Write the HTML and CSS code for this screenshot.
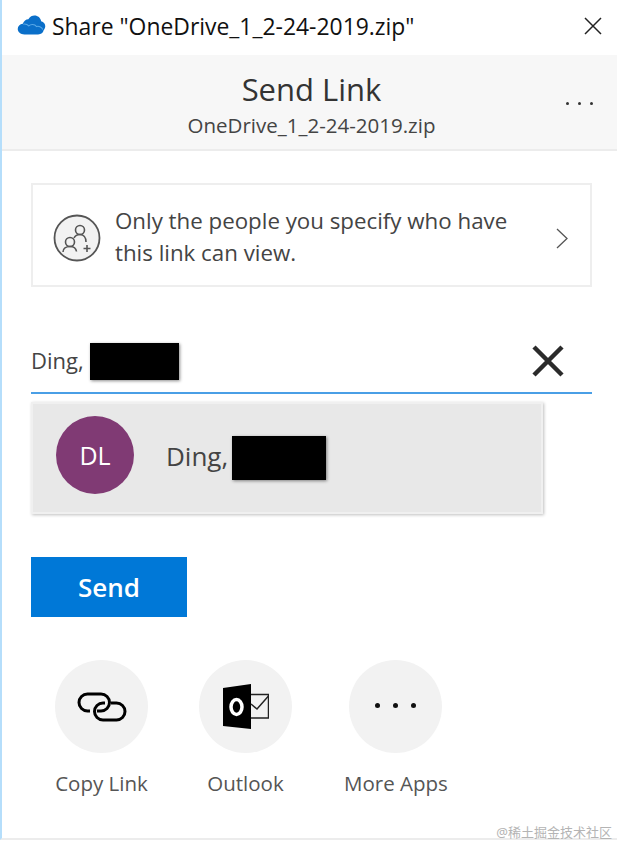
FILE: index.html
```html
<!doctype html>
<html lang="en">
    <head>
        <meta charset="UTF-8" />
        <meta name="viewport" content="width=device-width, initial-scale=1.0" />
        <title>Share</title>
        <link rel="stylesheet" href="styles.css">
    </head>
    <body>
        <div class="window">
            <div class="titlebar">
                <svg class="cloud" width="29" height="20" viewBox="0 0 24 17">
                    <path fill="#0a6fc9" d="M6 16.500C2.600 16.500.3 14.600.3 12c0-2.400 1.800-4.200 4.300-4.500C5.400 5.200 7.300 3.800 9.300 3.700 10.800 1.400 12.600.5 14.500.5c3 0 5.200 2 5.700 4.800 2.300.5 3.600 2.300 3.500 4.500-.1 1.300-.7 2.400-1.400 3.200-.4 2-2 3.500-4.700 3.500Z"/>
                    <path fill="none" stroke="#5aa9e8" stroke-width=".9" d="M5 7.800c2-.3 3.500.2 4.700 1.500 1.300-1.500 5-2 6.500.5 1.700-.6 4.400 0 5.400 2.500"/>
                </svg>
                <span class="titlebar-text">Share "OneDrive_1_2-24-2019.zip"</span>
                <svg class="close" width="18" height="18" viewBox="0 0 18 18">
                    <path stroke="#222" stroke-width="1.500" d="M1 1 17 17M17 1 1 17"/>
                </svg>
            </div>

            <div class="header">
                <h1>Send Link</h1>
                <div class="file-name">OneDrive_1_2-24-2019.zip</div>
                <div class="more"><i></i><i></i><i></i></div>
            </div>

            <div class="content">
                <div class="notice">
                    <svg class="notice-icon" width="48" height="48" viewBox="0 0 48 48">
                        <circle cx="24" cy="24" r="22.500" fill="#f2f2f2" stroke="#555" stroke-width="1.800"/>
                        <g fill="none" stroke="#555" stroke-width="1.600">
                            <circle cx="27" cy="16" r="4.500"/>
                            <circle cx="17" cy="28" r="4.500"/>
                            <path d="M10 38c0-3.500 3-5.500 7-5.500s6 1.500 6.500 5M21 24c1-2 3-3.500 6-3.500 3.500 0 6 3 6 7.500"/>
                            <path d="M34 31v7M30.500 34.500h7"/>
                        </g>
                    </svg>
                    <div class="notice-text">Only the people you specify who have this link can view.</div>
                    <svg class="chevron" width="12" height="21" viewBox="0 0 12 21">
                        <path fill="none" stroke="#555" stroke-width="1.300" d="M1 1 11 10.500 1 20"/>
                    </svg>
                </div>

                <div class="recipient">
                    <span class="recipient-name">Ding,</span>
                    <span class="redact redact-input"></span>
                    <svg class="clear" width="32" height="32" viewBox="0 0 32 32">
                        <path stroke="#2b2b2b" stroke-width="4.500" d="M2 2 30 30M30 2 2 30"/>
                    </svg>
                </div>

                <div class="suggestion">
                    <div class="avatar">DL</div>
                    <span class="suggestion-name">Ding,</span>
                    <span class="redact redact-row"></span>
                </div>

                <button class="send">Send</button>

                <div class="apps">
                    <div class="app">
                        <div class="app-circle">
                            <svg width="50" height="30" viewBox="0 0 50 30">
                                <g fill="none" stroke="#000" stroke-width="3">
                                    <path d="M13 19H10.500A8.500 8.500 0 0 1 10.500 2H24A8.500 8.500 0 0 1 24 19H20"/>
                                    <path d="M34 11H39.500A8.500 8.500 0 0 1 39.500 28H26A8.500 8.500 0 0 1 26 11H28"/>
                                </g>
                            </svg>
                        </div>
                        <div class="app-label">Copy Link</div>
                    </div>
                    <div class="app">
                        <div class="app-circle">
                            <svg width="46" height="46" viewBox="0 0 46 46">
                                <path d="M0 4 28 0V45L0 42Z"/>
                                <ellipse cx="13.500" cy="23" rx="5.500" ry="7.500" fill="none" stroke="#fff" stroke-width="3.500"/>
                                <g fill="none" stroke="#222" stroke-width="1.500">
                                    <path d="M28 10.500H45.500V34H28"/>
                                    <path d="M28 20 34 25 45.500 12"/>
                                </g>
                            </svg>
                        </div>
                        <div class="app-label">Outlook</div>
                    </div>
                    <div class="app app-more">
                        <div class="app-circle">
                            <div class="app-dots"><i></i><i></i><i></i></div>
                        </div>
                        <div class="app-label">More Apps</div>
                    </div>
                </div>
            </div>
        </div>
        <div class="watermark">@稀土掘金技术社区</div>
    </body>
</html>
```

FILE: styles.css
```css
body {
    font-family: "Open Sans", "Noto Sans", sans-serif;
    background-color: #fff;
    color: #333;
    margin: 0;
    padding: 0;
}
.window {
    box-sizing: border-box;
    height: 840px;
    border-left: 2px solid #b5defb;
    border-bottom: 2px solid #ececec;
    overflow: hidden;
}

.titlebar {
    height: 55px;
    display: flex;
    align-items: center;
    padding: 0 15px 0 15px;
    color: #111;
}
.cloud {
    margin-right: 6px;
    margin-top: -6px;
}
.titlebar-text {
    font-size: 22.900px;
    flex: 1;
    margin-top: -3px;
    white-space: nowrap;
}
.close {
    margin-top: -3px;
}

.header {
    position: relative;
    box-sizing: border-box;
    height: 96px;
    background-color: #f7f7f7;
    border-bottom: 2px solid #ececec;
    text-align: center;
    padding: 13px 0 0 4px;
}
h1 {
    font-size: 31px;
    font-weight: 400;
    line-height: 42px;
    margin: 0;
    color: #333;
}
.file-name {
    font-size: 20.500px;
    line-height: 30px;
    color: #444;
}
.more {
    position: absolute;
    right: 24px;
    top: 47px;
    display: flex;
    gap: 9px;
}
.more i, .app-dots i {
    display: block;
    width: 3px;
    height: 3px;
    border-radius: 50%;
    background-color: #333;
}

.content {
    padding: 32px 25px 0 29px;
}

.notice {
    box-sizing: border-box;
    height: 104px;
    display: flex;
    align-items: center;
    border: 2px solid #eee;
    padding: 0 22px 0 20px;
}
.notice-icon {
    flex: none;
    margin-top: 6px;
    margin-right: 14px;
}
.notice-text {
    flex: 1;
    max-width: 420px;
    margin-top: 3px;
    margin-right: auto;
    font-size: 22.300px;
    line-height: 32px;
    color: #444;
}
.chevron {
    flex: none;
    margin-top: 6px;
}

.recipient {
    box-sizing: border-box;
    height: 52px;
    margin-top: 55px;
    padding: 0 0 12px 0;
    display: flex;
    align-items: center;
    border-bottom: 2px solid #4a9fe6;
}
.recipient-name {
    font-size: 22px;
    color: #444;
    margin-right: 6px;
    margin-bottom: 2px;
}
.redact {
    display: block;
    background-color: #000;
    box-shadow: 1px 1px 3px rgba(0, 0, 0, .45);
}
.redact-input {
    width: 89px;
    height: 37px;
}
.clear {
    margin-left: auto;
    margin-right: 28px;
}

.suggestion {
    box-sizing: border-box;
    width: 512px;
    height: 112px;
    margin-top: 8px;
    display: flex;
    align-items: center;
    padding-left: 23px;
    background-color: #e8e8e8;
    border: 2px solid #f0f0f0;
    box-shadow: 1px 1px 3px rgba(0, 0, 0, .25);
}
.avatar {
    width: 78px;
    height: 78px;
    margin-bottom: 6px;
    border-radius: 50%;
    background-color: #803a74;
    color: #fff;
    font-size: 25px;
    display: flex;
    align-items: center;
    justify-content: center;
    margin-right: 32px;
    flex: none;
}
.suggestion-name {
    font-size: 26px;
    color: #444;
    margin-right: 4px;
    margin-bottom: 5px;
}
.redact-row {
    width: 94px;
    height: 44px;
}

.send {
    display: block;
    width: 156px;
    height: 60px;
    margin-top: 43px;
    background-color: #0078d7;
    color: #fff;
    border: none;
    font-family: inherit;
    font-size: 26px;
    font-weight: 600;
    padding: 0;
}

.apps {
    display: flex;
    align-items: flex-start;
    gap: 51px;
    margin-top: 43px;
    padding-left: 24px;
}
.app {
    display: flex;
    flex-direction: column;
    align-items: center;
    min-width: 93px;
}
.app-more {
    margin-left: 1px;
}
.app-circle {
    width: 93px;
    height: 93px;
    border-radius: 50%;
    background-color: #f2f2f2;
    display: flex;
    align-items: center;
    justify-content: center;
}
.app-dots {
    display: flex;
    gap: 13px;
    margin-bottom: 3px;
}
.app-dots i {
    width: 5px;
    height: 5px;
    background-color: #111;
}
.app-label {
    margin-top: 16px;
    font-size: 20.500px;
    line-height: 28px;
    color: #555;
    white-space: nowrap;
}

.watermark {
    position: absolute;
    right: 5px;
    top: 823px;
    font-family: "Noto Sans", "Noto Sans CJK SC", sans-serif;
    font-size: 13px;
    line-height: 18px;
    color: #b4b4b4;
}
```
